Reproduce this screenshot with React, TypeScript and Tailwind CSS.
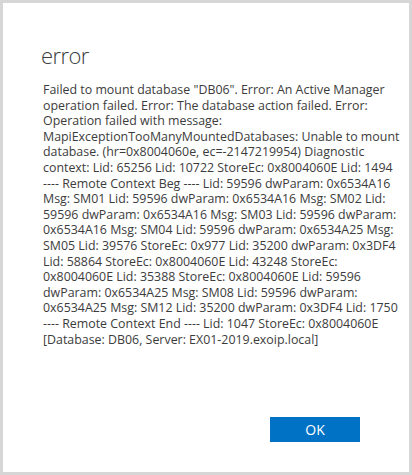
const lines = [
  'Failed to mount database "DB06". Error: An Active Manager',
  "operation failed. Error: The database action failed. Error:",
  "Operation failed with message:",
  "MapiExceptionTooManyMountedDatabases: Unable to mount",
  "database. (hr=0x8004060e, ec=-2147219954) Diagnostic",
  "context: Lid: 65256 Lid: 10722 StoreEc: 0x8004060E Lid: 1494",
  "---- Remote Context Beg ---- Lid: 59596 dwParam: 0x6534A16",
  "Msg: SM01 Lid: 59596 dwParam: 0x6534A16 Msg: SM02 Lid:",
  "59596 dwParam: 0x6534A16 Msg: SM03 Lid: 59596 dwParam:",
  "0x6534A16 Msg: SM04 Lid: 59596 dwParam: 0x6534A25 Msg:",
  "SM05 Lid: 39576 StoreEc: 0x977 Lid: 35200 dwParam: 0x3DF4",
  "Lid: 58864 StoreEc: 0x8004060E Lid: 43248 StoreEc:",
  "0x8004060E Lid: 35388 StoreEc: 0x8004060E Lid: 59596",
  "dwParam: 0x6534A25 Msg: SM08 Lid: 59596 dwParam:",
  "0x6534A25 Msg: SM12 Lid: 35200 dwParam: 0x3DF4 Lid: 1750",
  "---- Remote Context End ---- Lid: 1047 StoreEc: 0x8004060E",
  "[Database: DB06, Server: EX01-2019.exoip.local]",
];

export default function App() {
  return (
    <div className="h-[475px] w-[412px] bg-[#d6d6d6] p-[3px] font-['Open_Sans',sans-serif] text-[#3c3c3c]">
      <div className="flex h-full flex-col bg-white">
        {/* 제목 */}
        <h1 className="pl-[38px] pt-[37px] text-[22px] font-light leading-[30px] tracking-[-0.6px]">
          error
        </h1>

        {/* 오류 메시지 */}
        <div className="mt-[12px] pl-[40px] text-[12.4px] leading-[15.6px]">
          {lines.map((line) => (
            <div key={line} className="whitespace-nowrap">
              {line}
            </div>
          ))}
        </div>

        <div className="flex-1" />

        {/* 확인 버튼 */}
        <div className="flex justify-end pb-[30px] pr-[49px]">
          <button className="h-[25px] w-[90px] bg-[#0072c6] text-[14px] text-white">
            OK
          </button>
        </div>
      </div>
    </div>
  );
}
